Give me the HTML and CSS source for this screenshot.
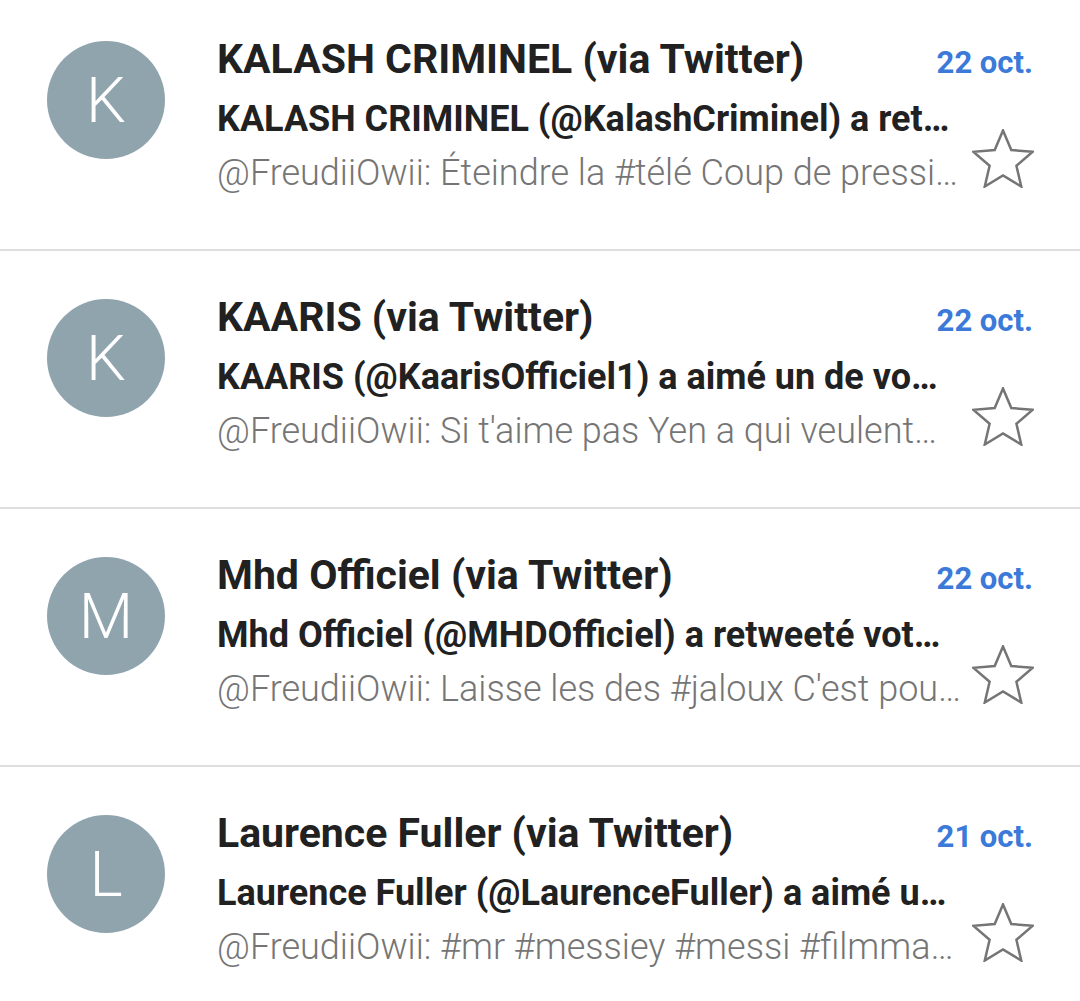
FILE: index.html
```html
<!DOCTYPE html>
<html lang="fr">
<head>
    <meta charset="UTF-8">
    <meta name="viewport" content="width=device-width, initial-scale=1.0">
    <title>Boîte de réception</title>
    <link rel="stylesheet" href="styles.css">
</head>
<body>
    <main class="inbox">
        <div class="mail">
            <div class="avatar">K</div>
            <div class="mail-body">
                <div class="mail-head">
                    <span class="sender">KALASH CRIMINEL (via Twitter)</span>
                    <span class="date">22 oct.</span>
                </div>
                <div class="mail-lower">
                    <div class="lines">
                        <p class="subject">KALASH CRIMINEL (@KalashCriminel) a ret…</p>
                        <p class="snippet">@FreudiiOwii: Éteindre la #télé Coup de pressi…</p>
                    </div>
                    <svg class="star" viewBox="1.5 1.5 21 20"><path d="M22 9.24l-7.19-.62L12 2 9.19 8.63 2 9.24l5.46 4.73L5.82 21 12 17.27 18.18 21l-1.63-7.03z"/></svg>
                </div>
            </div>
        </div>

        <div class="mail">
            <div class="avatar">K</div>
            <div class="mail-body">
                <div class="mail-head">
                    <span class="sender">KAARIS (via Twitter)</span>
                    <span class="date">22 oct.</span>
                </div>
                <div class="mail-lower">
                    <div class="lines">
                        <p class="subject">KAARIS (@KaarisOfficiel1) a aimé un de vo…</p>
                        <p class="snippet">@FreudiiOwii: Si t'aime pas Yen a qui veulent…</p>
                    </div>
                    <svg class="star" viewBox="1.5 1.5 21 20"><path d="M22 9.24l-7.19-.62L12 2 9.19 8.63 2 9.24l5.46 4.73L5.82 21 12 17.27 18.18 21l-1.63-7.03z"/></svg>
                </div>
            </div>
        </div>

        <div class="mail">
            <div class="avatar">M</div>
            <div class="mail-body">
                <div class="mail-head">
                    <span class="sender">Mhd Officiel (via Twitter)</span>
                    <span class="date">22 oct.</span>
                </div>
                <div class="mail-lower">
                    <div class="lines">
                        <p class="subject">Mhd Officiel (@MHDOfficiel) a retweeté vot…</p>
                        <p class="snippet">@FreudiiOwii: Laisse les des #jaloux C'est pou…</p>
                    </div>
                    <svg class="star" viewBox="1.5 1.5 21 20"><path d="M22 9.24l-7.19-.62L12 2 9.19 8.63 2 9.24l5.46 4.73L5.82 21 12 17.27 18.18 21l-1.63-7.03z"/></svg>
                </div>
            </div>
        </div>

        <div class="mail">
            <div class="avatar">L</div>
            <div class="mail-body">
                <div class="mail-head">
                    <span class="sender">Laurence Fuller (via Twitter)</span>
                    <span class="date">21 oct.</span>
                </div>
                <div class="mail-lower">
                    <div class="lines">
                        <p class="subject">Laurence Fuller (@LaurenceFuller) a aimé u…</p>
                        <p class="snippet">@FreudiiOwii: #mr #messiey #messi #filmma…</p>
                    </div>
                    <svg class="star" viewBox="1.5 1.5 21 20"><path d="M22 9.24l-7.19-.62L12 2 9.19 8.63 2 9.24l5.46 4.73L5.82 21 12 17.27 18.18 21l-1.63-7.03z"/></svg>
                </div>
            </div>
        </div>
    </main>
</body>
</html>
```

FILE: styles.css
```css
body {
    font-family: 'Roboto', sans-serif;
    margin: 0;
    padding: 0;
    background-color: #fff;
    color: #212121;
    overflow: hidden;
}

.inbox {
    margin-top: -7px;
}

.mail {
    display: flex;
    align-items: flex-start;
    height: 258px;
    padding: 41px 47px 0 47px;
    box-sizing: border-box;
    border-bottom: 2px solid #dedede;
}

.avatar {
    flex: none;
    width: 118px;
    height: 118px;
    margin-top: 7px;
    border-radius: 50%;
    background-color: #90a4ae; /* gris bleu */
    color: #fff;
    font-weight: 300;
    font-size: 63px;
    display: flex;
    align-items: center;
    justify-content: center;
}

.mail-body {
    flex: 1;
    min-width: 0;
    margin-left: 52px;
}

.mail-head {
    display: flex;
    justify-content: space-between;
    align-items: baseline;
    height: 50px;
    line-height: 50px;
}

.sender {
    font-size: 41px;
    font-weight: bold;
    white-space: nowrap;
    overflow: hidden;
    text-overflow: ellipsis;
}

.date {
    font-size: 31px;
    font-weight: bold;
    line-height: 1;
    color: #3b7ad9;
    margin-left: 16px;
    white-space: nowrap;
}

.mail-lower {
    display: flex;
    align-items: flex-end;
    margin-top: 8px;
}

.lines {
    flex: 1;
    min-width: 0;
}

.subject,
.snippet {
    margin: 0;
    font-size: 36px;
    line-height: 54px;
    white-space: nowrap;
    overflow: hidden;
    text-overflow: ellipsis;
}

.subject {
    font-weight: bold;
}

.snippet {
    font-weight: 300;
    color: #757575;
}

.star {
    flex: none;
    width: 62px;
    height: 59px;
    margin-left: 8px;
    margin-right: -1px;
    margin-bottom: 12px;
    fill: none;
    stroke: #757575;
    stroke-width: 0.85;
}
```
